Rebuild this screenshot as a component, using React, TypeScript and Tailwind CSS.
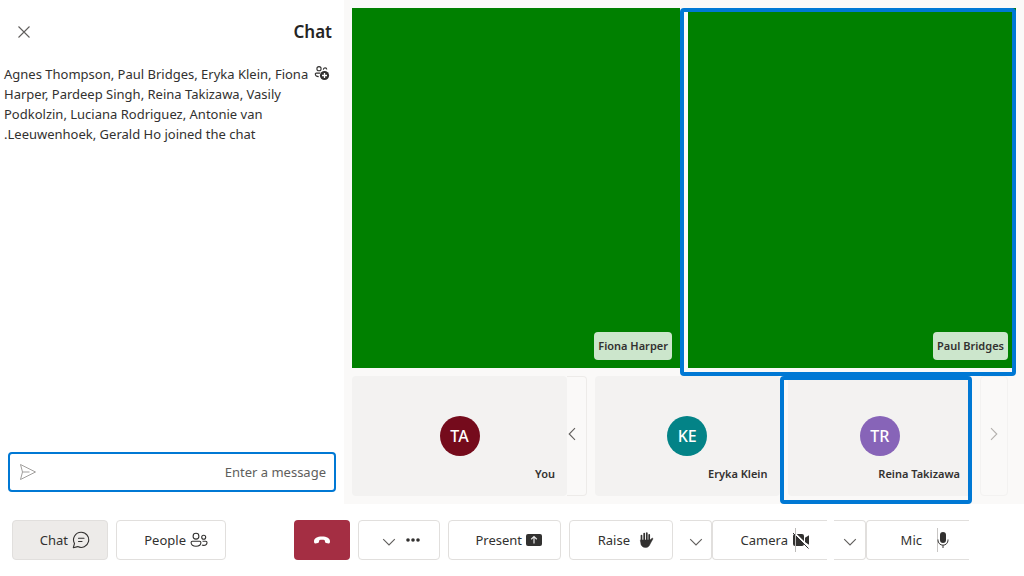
import type { ReactNode } from "react";

const Chevron = ({ d, className = "" }: { d: string; className?: string }) => (
  <svg viewBox="0 0 16 16" className={`size-4 shrink-0 ${className}`} fill="none" stroke="currentColor" strokeWidth="1.1">
    <path d={d} />
  </svg>
);
const DOWN = "M2.2 5.2 8 11l5.800-5.800";
const LEFT = "M11 2.200 5.200 8l5.800 5.800";
const RIGHT = "M5 2.200 10.800 8 5 13.800";

const ChatIcon = () => (
  <svg viewBox="0 0 18 18" className="size-[18px] shrink-0" fill="none" stroke="currentColor" strokeWidth="1.1" strokeLinecap="round" strokeLinejoin="round">
    <path d="M9.200 1.200a7.600 7.600 0 1 1-3.500 14.400L1.300 16.700l1.200-4.200A7.600 7.600 0 0 1 9.200 1.200Z" />
    <path d="M6.500 7.300h5.500M6.500 10.500h3.500" />
  </svg>
);

const PeopleIcon = () => (
  <svg viewBox="0 0 18 18" className="size-[18px] shrink-0" fill="none" stroke="currentColor" strokeWidth="1.1">
    <circle cx="6" cy="5.200" r="2.900" />
    <circle cx="13.700" cy="6.200" r="2" />
    <path d="M2.400 10.300h7.200c.8 0 1.300.5 1.300 1.200 0 2.300-1.900 3.700-4.900 3.700s-4.900-1.400-4.900-3.700c0-.7.500-1.200 1.300-1.200ZM12.500 10.300h3.200c.8 0 1.300.5 1.300 1.200 0 1.800-1.400 2.900-3.400 2.900-.7 0-1.200-.1-1.700-.3" />
  </svg>
);

const PeopleAddIcon = () => (
  <svg viewBox="0 0 16 16" className="mt-px size-4 shrink-0" fill="none" stroke="currentColor" strokeWidth="1.100">
    <circle cx="5" cy="3.700" r="2.100" />
    <path d="M9.300 4.800c.1-2.500 3.300-2.500 3.500-.3M6 8.100H2.200c-.6 0-.9.300-.9.900 0 1.500 1.200 2.500 3.400 2.600" />
    <circle cx="10.500" cy="10.500" r="4.600" fill="currentColor" stroke="none" />
    <path d="M10.500 8v5M8 10.500h5" stroke="white" strokeWidth="1.300" />
  </svg>
);

const SendIcon = () => (
  <svg viewBox="0 0 18 18" className="size-[18px] shrink-0" fill="none" stroke="currentColor" strokeWidth="1" strokeLinejoin="round">
    <path d="M2.500 1.500 17.500 9 2.500 16.500 4.500 9Z M4.500 9h7" />
  </svg>
);

const HangUpIcon = () => (
  <svg viewBox="0 0 18 18" className="size-[18px]" fill="currentColor">
    <path d="M9 5.500c4.800 0 8 1.800 8 4.800 0 .5-.1 1-.2 1.400-.2.500-.7.800-1.200.700l-2.500-.5c-.5-.1-.9-.5-1-1l-.4-1.700c-1.700-.6-3.700-.6-5.400 0l-.4 1.700c-.1.500-.5.900-1 1l-2.500.5c-.5.100-1-.2-1.200-.7-.1-.4-.2-.9-.2-1.400 0-3 3.200-4.800 8-4.800Z" />
  </svg>
);

const MoreIcon = () => (
  <svg viewBox="0 0 16 16" className="size-4" fill="currentColor">
    <circle cx="3" cy="8" r="1.800" />
    <circle cx="8" cy="8" r="1.800" />
    <circle cx="13" cy="8" r="1.800" />
  </svg>
);

const PresentIcon = () => (
  <svg viewBox="0 0 16 16" className="size-4 shrink-0">
    <rect y="2" width="16" height="12" rx="2" fill="currentColor" />
    <path d="M8 11.500v-7M5.200 7.200 8 4.500l2.800 2.700" fill="none" stroke="#e8e8e8" strokeWidth="1.200" />
  </svg>
);

const HandIcon = () => (
  <svg viewBox="0 0 16 18" className="h-[18px] w-4 shrink-0" fill="currentColor" stroke="currentColor" strokeLinecap="round">
    <path d="M3.500 4.500v6M6.200 2.500v8M8.800 2v8M11.200 3.800v7" strokeWidth="1.700" fill="none" />
    <path d="M2.700 9h9.300l1.800-1.600c.6-.5 1.500-.1 1.100.6-.8 1.600-2 3.200-2.800 5-.9 2.200-2 3.500-4.400 3.500-3 0-5-1.800-5-5Z" strokeWidth=".5" />
  </svg>
);

const CameraOffIcon = () => (
  <svg viewBox="0 0 18 24" className="h-6 w-[18px] shrink-0">
    <rect x="1" y="6" width="11" height="12" rx="2" fill="currentColor" />
    <path d="m13 9.800 4-2.600v9.600l-4-2.600Z" fill="currentColor" />
    <path d="m1.800 4.500 16 15.500" stroke="white" strokeWidth="1.800" />
    <path d="m1 5 15.500 15.500" stroke="currentColor" strokeWidth="1" />
    <path d="M3.500 0v24" stroke="#bdbbb9" />
  </svg>
);

const MicIcon = () => (
  <svg viewBox="0 0 14 24" className="h-6 w-[14px] shrink-0">
    <path d="M1.500 0v24" stroke="#c8c6c4" />
    <rect x="4" y="4" width="6" height="11" rx="3" fill="currentColor" />
    <path d="M2 11.500v.7a5 5 0 0 0 10 0v-.7M7 17.300v2.700" fill="none" stroke="currentColor" strokeWidth="1" />
  </svg>
);

const BarButton = ({ label, className, children }: { label?: string; className: string; children: ReactNode }) => (
  <button aria-label={label} className={`flex h-10 shrink-0 items-center border-[#e1dfdd] ${className}`}>
    {children}
  </button>
);

const Highlight = () => (
  <div className="pointer-events-none absolute top-0 right-0 -bottom-2 -left-2 z-10 rounded border-4 border-[#0078d4]" />
);

const VideoTile = ({ name, active }: { name: string; active?: boolean }) => (
  <div className="relative flex flex-1 items-end justify-end bg-[#008000] p-2">
    <span className="flex h-7 items-center rounded bg-white/80 px-1 text-[11px] font-semibold">{name}</span>
    {active && <Highlight />}
  </div>
);

type Person = { initials: string; name: string; color: string; size: string; active?: boolean };

const PersonTile = ({ initials, name, color, size, active }: Person) => (
  <div className={`relative grid place-items-center rounded bg-[#f3f2f1] ${size}`}>
    <div className={`flex size-10 items-center justify-center rounded-full text-[16px] font-medium text-white ${color}`}>{initials}</div>
    <span className="absolute right-3 bottom-3 text-[11px] leading-5 font-semibold">{name}</span>
    {active && <Highlight />}
  </div>
);

export default function App() {
  return (
    <div className="flex h-screen flex-col overflow-hidden bg-white font-['Noto_Sans',sans-serif] text-[13px] leading-5 text-[#323130]">
      <main className="flex min-h-0 flex-1">
        <aside className="flex w-[344px] shrink-0 flex-col">
          <header className="flex h-16 items-center justify-between pr-3 pl-4">
            <button aria-label="Close chat" className="text-[#605e5c]">
              <svg viewBox="0 0 16 16" className="size-4" fill="none" stroke="currentColor" strokeWidth="1.100">
                <path d="m2.500 2.500 11 11m0-11-11 11" />
              </svg>
            </button>
            <h2 className="text-[17px] font-semibold text-[#242424]">Chat</h2>
          </header>
          <div className="flex gap-1 pr-[14px] pl-1">
            <p className="flex-1 whitespace-nowrap">
              Agnes Thompson, Paul Bridges, Eryka Klein, Fiona
              <br />
              Harper, Pardeep Singh, Reina Takizawa, Vasily
              <br />
              Podkolzin, Luciana Rodriguez, Antonie van
              <br />
              .Leeuwenhoek, Gerald Ho joined the chat
            </p>
            <PeopleAddIcon />
          </div>
          <form className="mx-2 mt-auto mb-3 flex h-10 items-center rounded border-2 border-[#0078d4] px-2" onSubmit={(e) => e.preventDefault()}>
            <button aria-label="Send message" className="text-[#a19f9d]">
              <SendIcon />
            </button>
            <input aria-label="Enter a message" placeholder="Enter a message" className="min-w-0 flex-1 text-right outline-none placeholder:text-[#605e5c]" />
          </form>
        </aside>

        <section className="flex min-w-0 flex-1 flex-col gap-2 bg-[#faf9f8] p-2">
          <div className="flex min-h-0 flex-1 gap-2">
            <VideoTile name="Fiona Harper" />
            <VideoTile name="Paul Bridges" active />
          </div>
          <div className="flex h-[120px] shrink-0 pr-2">
            <PersonTile initials="TA" name="You" color="bg-[#750b1c]" size="w-[215px]" />
            <button aria-label="Previous participants" className="flex w-5 items-center rounded-r border border-l-0 border-[#edebe9] pb-1 text-[#605e5c]">
              <Chevron d={LEFT} className="-ml-[3px]" />
            </button>
            <div className="mr-2 ml-2 flex min-w-0 flex-1 gap-2">
              <PersonTile initials="KE" name="Eryka Klein" color="bg-[#038387]" size="flex-1" />
              <PersonTile initials="TR" name="Reina Takizawa" color="bg-[#8764b8]" size="flex-1" active />
            </div>
            <button aria-label="Next participants" disabled className="flex w-7 items-center justify-center rounded border border-[#f3f2f1] pb-1 text-[#b3b0ad]">
              <Chevron d={RIGHT} />
            </button>
          </div>
        </section>
      </main>

      <footer className="flex h-[72px] shrink-0 items-center px-3">
        <div className="flex gap-2">
          <BarButton className="w-24 justify-end gap-1 rounded border bg-[#edebe9] pr-[17px]">
            Chat <ChatIcon />
          </BarButton>
          <BarButton className="w-[110px] justify-end gap-1 rounded border pr-[17px]">
            People <PeopleIcon />
          </BarButton>
        </div>
        <div className="mr-[43px] ml-auto flex">
          <BarButton label="Leave" className="mr-2 w-14 justify-center rounded bg-[#a42e43] text-white">
            <HangUpIcon />
          </BarButton>
          <BarButton label="More options" className="mr-2 w-[82px] justify-end gap-2 rounded border pr-[18px]">
            <Chevron d={DOWN} className="mt-1 text-[#605e5c]" />
            <MoreIcon />
          </BarButton>
          <BarButton className="mr-2 w-[113px] justify-end gap-1 rounded border pr-[18px]">
            Present <PresentIcon />
          </BarButton>
          <BarButton className="mr-[7px] w-[104px] justify-end gap-2 rounded border pr-[18px]">
            Raise <HandIcon />
          </BarButton>
          <BarButton label="Camera options" className="w-8 justify-center rounded-r border border-l-0">
            <Chevron d={DOWN} className="mt-1 text-[#605e5c]" />
          </BarButton>
          <BarButton className="mr-[7px] w-[115px] justify-end gap-1 rounded-l border border-r-0 pr-[17px]">
            Camera <CameraOffIcon />
          </BarButton>
          <BarButton label="Microphone options" className="w-8 justify-center rounded-r border border-l-0">
            <Chevron d={DOWN} className="mt-1 text-[#605e5c]" />
          </BarButton>
          <BarButton className="w-[103px] justify-end gap-[14px] rounded-l border border-r-0 pr-[19px]">
            Mic <MicIcon />
          </BarButton>
        </div>
      </footer>
    </div>
  );
}
